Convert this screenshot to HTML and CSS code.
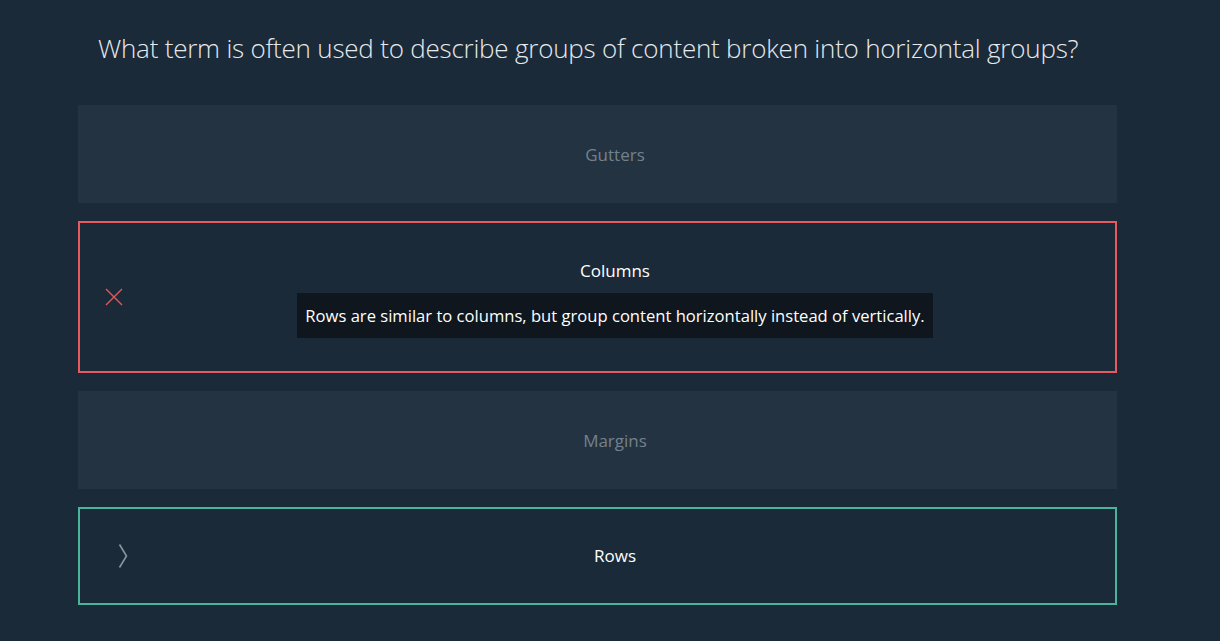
FILE: index.html
```html
<!DOCTYPE html>
<html>
<head>
<meta charset="utf-8">
<link rel="stylesheet" href="styles.css">
</head>
<body>
<main class="quiz">
  <h1 class="question">What term is often used to describe groups of content broken into horizontal groups?</h1>
  <ul class="answers">
    <li class="answer">Gutters</li>
    <li class="answer answer--wrong">
      <svg class="icon icon-x" width="20" height="20" viewBox="0 0 20 20"><path d="M2 2 L18 18 M18 2 L2 18" stroke="#e0575c" stroke-width="1.4" fill="none"/></svg>
      <span class="label">Columns</span>
      <span class="feedback">Rows are similar to columns, but group content horizontally instead of vertically.</span>
    </li>
    <li class="answer">Margins</li>
    <li class="answer answer--correct">
      <svg class="icon icon-chev" width="10" height="26" viewBox="0 0 10 26"><path d="M1.5 1.5 L8.5 13 L1.5 24.5" stroke="#8a96a0" stroke-width="1.6" fill="none"/></svg>
      <span class="label">Rows</span>
    </li>
  </ul>
</main>
</body>
</html>
```
FILE: styles.css
```css
html, body {
  margin: 0;
  padding: 0;
  background: #1b2a38;
  font-family: "Open Sans", "Noto Sans", sans-serif;
}
.quiz {
  padding: 25px 103px 0 78px;
}
.question {
  margin: 0 0 34px 20px;
  font-weight: 300;
  font-size: 26px;
  line-height: 46px;
  color: #e6e9ec;
  letter-spacing: -0.22px;
}
.answers {
  list-style: none;
  margin: 0;
  padding: 0;
  display: flex;
  flex-direction: column;
  gap: 18px;
}
.answer {
  position: relative;
  height: 98px;
  box-sizing: border-box;
  padding-left: 35px;
  background: #233342;
  color: #74818c;
  font-size: 17px;
  display: flex;
  flex-direction: column;
  align-items: center;
  justify-content: center;
}
.answer--wrong {
  height: 152px;
  background: #1b2a38;
  border: 2px solid #e85a5e;
  justify-content: flex-start;
  padding-top: 36px;
  color: #fff;
}
.answer--correct {
  background: #1b2a38;
  border: 2px solid #4ab59c;
  color: #fff;
}
.label {
  line-height: 24px;
}
.feedback {
  margin-top: 10px;
  background: #0f161e;
  color: #fff;
  font-size: 16.6px;
  line-height: 45px;
  padding: 0 8px;
}
.icon {
  position: absolute;
}
.icon-x {
  left: 24px;
  top: 64px;
}
.icon-chev {
  left: 38px;
  top: 34px;
}
```
